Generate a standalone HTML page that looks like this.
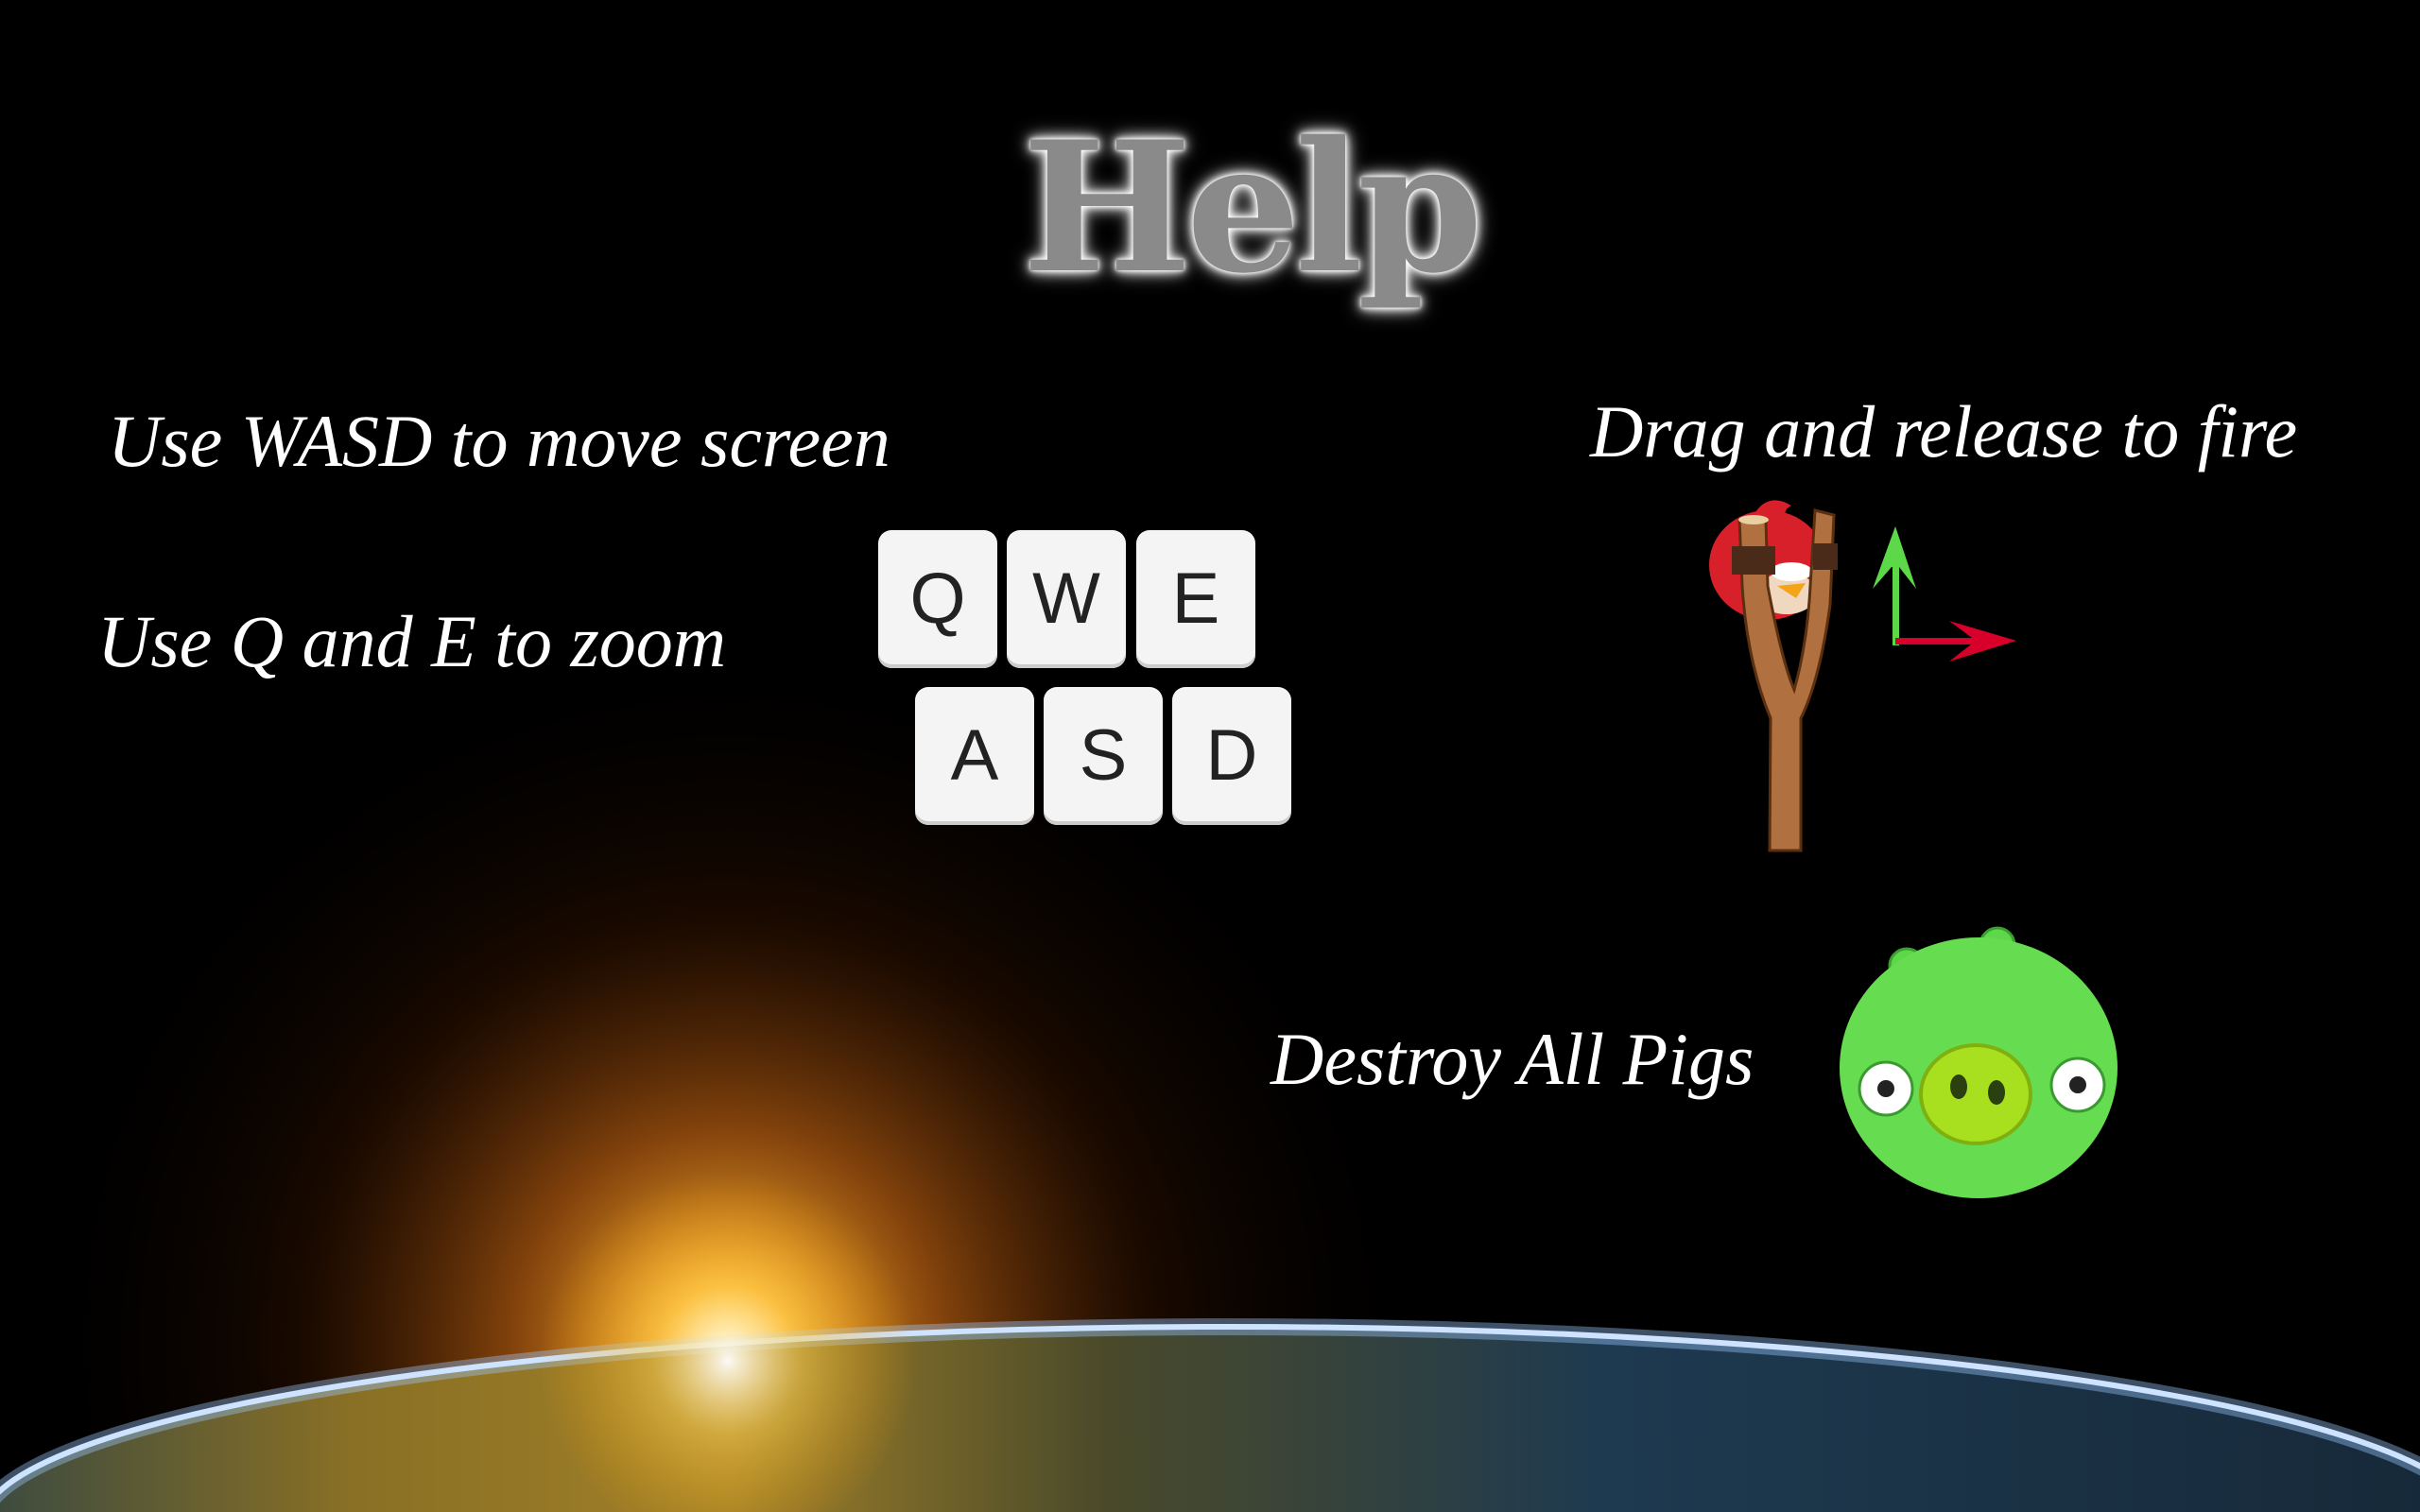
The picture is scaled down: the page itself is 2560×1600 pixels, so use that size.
<!DOCTYPE html>
<html><head><meta charset="utf-8"><style>
html,body{margin:0;padding:0;width:2560px;height:1600px;background:#000;overflow:hidden}
#w{position:relative;width:2560px;height:1600px;overflow:hidden}
.t{position:absolute;color:#fff;font-family:"Liberation Serif",serif;font-style:italic;font-size:78px;white-space:nowrap;line-height:1}
.key{position:absolute;width:126px;height:146px;background:#f4f4f4;border-radius:14px;font-family:"Liberation Sans",sans-serif;font-size:76px;color:#222;text-align:center;line-height:146px;box-shadow:inset 0 -4px 0 #ccc}
.help{position:absolute;left:1072px;top:125px;width:500px;text-align:center;font-family:"DejaVu Serif","Liberation Serif",serif;font-weight:bold;font-size:190px;color:#8a8a8a;line-height:1;text-shadow:0 0 3px #fff,0 0 8px #fff,0 0 14px #fff,0 0 22px #ccc;letter-spacing:-6px}
</style></head><body><div id="w">
<svg width="2560" height="1600" style="position:absolute;left:0;top:0;display:block">
<defs>
<radialGradient id="sun" cx="770" cy="1420" r="750" gradientUnits="userSpaceOnUse">
<stop offset="0" stop-color="#ffe890"/><stop offset="0.08" stop-color="#f8b030"/>
<stop offset="0.3" stop-color="#b05a10" stop-opacity="0.75"/><stop offset="0.6" stop-color="#401800" stop-opacity="0.4"/><stop offset="1" stop-color="#000" stop-opacity="0"/></radialGradient>
<linearGradient id="earth" x1="0" y1="0" x2="1" y2="0">
<stop offset="0" stop-color="#3a4a40"/><stop offset="0.15" stop-color="#8a7025"/><stop offset="0.3" stop-color="#a08028"/><stop offset="0.45" stop-color="#4a4a2a"/><stop offset="0.65" stop-color="#1e3a50"/><stop offset="1" stop-color="#162838"/></linearGradient>
<radialGradient id="sun2" cx="770" cy="1440" r="200" gradientUnits="userSpaceOnUse">
<stop offset="0" stop-color="#fff" stop-opacity="0.95"/><stop offset="0.4" stop-color="#ffd050" stop-opacity="0.5"/><stop offset="1" stop-color="#ffa000" stop-opacity="0"/></radialGradient>
</defs>
<rect x="0" y="0" width="2560" height="1600" fill="url(#sun)"/>
<ellipse cx="1300" cy="1614" rx="1320" ry="210" fill="url(#earth)" stroke="#eef6ff" stroke-width="6"/>
<ellipse cx="1300" cy="1614" rx="1320" ry="210" fill="none" stroke="#9cc8ff" stroke-opacity="0.4" stroke-width="18"/>
<rect x="400" y="1100" width="800" height="500" fill="url(#sun2)"/>
<ellipse cx="1870" cy="598" rx="62" ry="58" fill="#d8202a"/>
<path d="M1855 545 q15-25 40-10 q-10 5-5 15z" fill="#d8202a"/>
<ellipse cx="1890" cy="628" rx="32" ry="22" fill="#f0d8c0"/>
<ellipse cx="1895" cy="605" rx="22" ry="10" fill="#fff"/>
<path d="M1880 620 l30-3 l-10 16z" fill="#f4a418"/>
<path d="M1840 550 L1868 550 L1870 620 Q1885 700 1898 730 Q1912 680 1915 620 L1920 540 L1940 545 L1936 640 Q1925 720 1905 760 L1905 900 L1872 900 L1873 760 Q1848 700 1843 620 Z" fill="#b07040" stroke="#5a3010" stroke-width="3"/>
<rect x="1832" y="578" width="46" height="30" fill="#4a2a18"/>
<rect x="1918" y="575" width="26" height="28" fill="#4a2a18"/>
<ellipse cx="1855" cy="550" rx="16" ry="5" fill="#e8d0a0"/>
<rect x="2002" y="580" width="7" height="103" fill="#5cd848"/>
<path d="M2005 557 L2027 623 L2009 600 L2001 600 L1981 623 Z" fill="#5cd848"/>
<rect x="2005" y="675" width="90" height="7" fill="#d8002a"/>
<path d="M2133 678 L2062 657 L2090 678 L2062 700 Z" fill="#d8002a"/>
<circle cx="2017" cy="1022" r="18" fill="#5ed84a" stroke="#3aa030" stroke-width="3"/>
<circle cx="2113" cy="1000" r="18" fill="#5ed84a" stroke="#3aa030" stroke-width="3"/>
<ellipse cx="2093" cy="1130" rx="147" ry="138" fill="#66dd50"/>
<ellipse cx="1995" cy="1152" rx="28" ry="28" fill="#fff" stroke="#3a9a30" stroke-width="3"/>
<circle cx="1995" cy="1152" r="9" fill="#222"/>
<ellipse cx="2198" cy="1148" rx="28" ry="28" fill="#fff" stroke="#3a9a30" stroke-width="3"/>
<circle cx="2198" cy="1148" r="9" fill="#222"/>
<ellipse cx="2090" cy="1158" rx="58" ry="52" fill="#a8e020" stroke="#80b010" stroke-width="4"/>
<ellipse cx="2072" cy="1150" rx="9" ry="13" fill="#2a4010"/>
<ellipse cx="2112" cy="1156" rx="9" ry="13" fill="#2a4010"/>
</svg>
<div class="help">Help</div>
<div class="t" style="left:114px;top:428px">Use WASD to move screen</div>
<div class="t" style="left:103px;top:640px">Use Q and E to zoom</div>
<div class="t" style="left:1682px;top:418px">Drag and release to fire</div>
<div class="t" style="left:1344px;top:1082px">Destroy All Pigs</div>
<div class="key" style="left:929px;top:561px">Q</div>
<div class="key" style="left:1065px;top:561px">W</div>
<div class="key" style="left:1202px;top:561px">E</div>
<div class="key" style="left:968px;top:727px">A</div>
<div class="key" style="left:1104px;top:727px">S</div>
<div class="key" style="left:1240px;top:727px">D</div>
</div></body></html>
